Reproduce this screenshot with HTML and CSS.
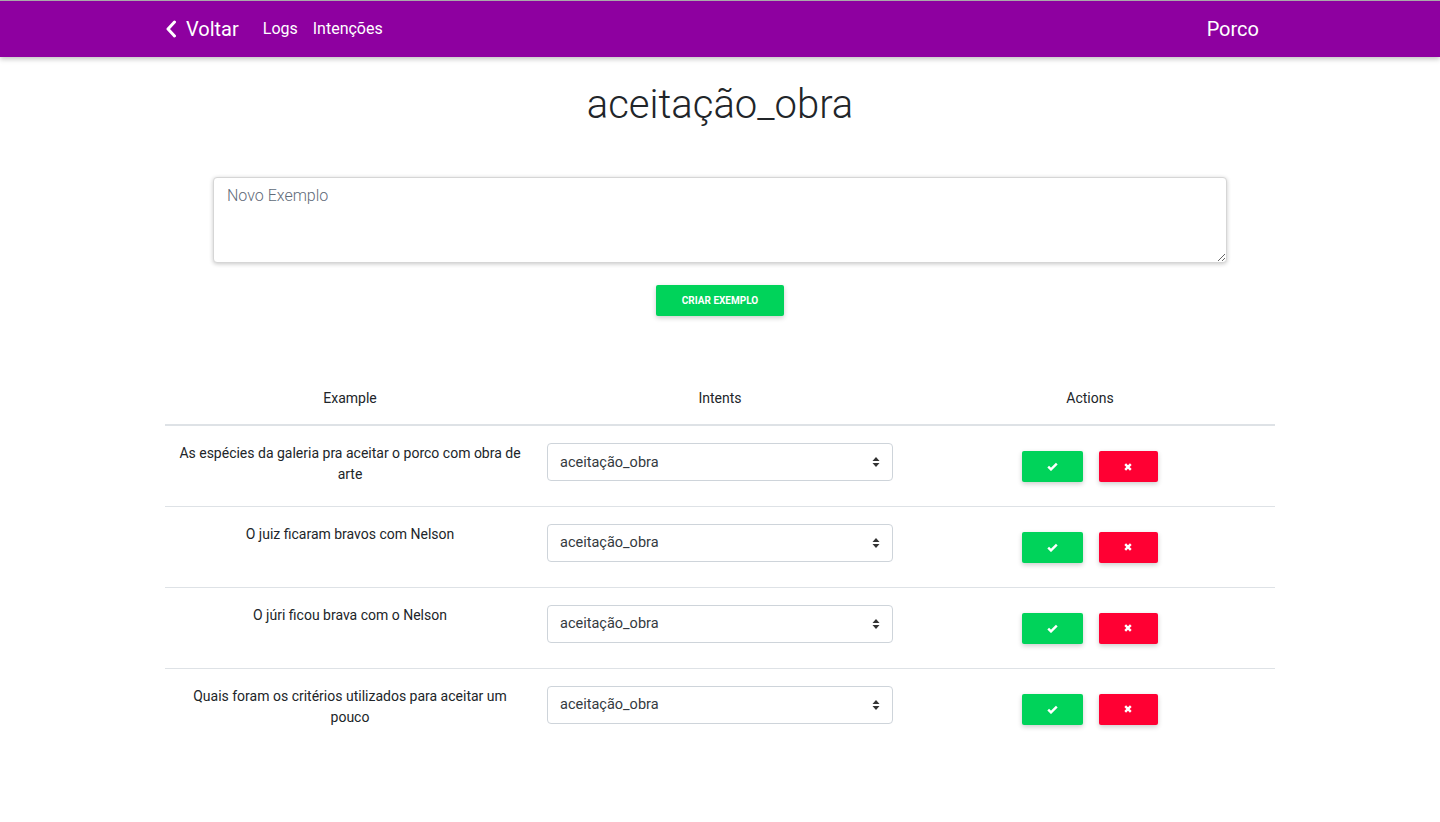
FILE: index.html
```html
<!DOCTYPE html>
<html lang="pt">
<head>
<meta charset="utf-8">
<title>aceitação_obra</title>
<link rel="stylesheet" href="styles.css">
</head>
<body>
<nav class="navbar">
  <div class="nav-inner">
    <div class="nav-left">
      <a class="back" href="#">
        <svg class="chev" width="12" height="18" viewBox="0 0 12 18"><path d="M9.5 2 L3 9 L9.5 16" fill="none" stroke="#fff" stroke-width="3" stroke-linecap="round" stroke-linejoin="round"/></svg>
        <span>Voltar</span>
      </a>
      <a class="nav-link" href="#">Logs</a>
      <a class="nav-link" href="#">Intenções</a>
    </div>
    <div class="brand">Porco</div>
  </div>
</nav>
<main class="container">
  <h1 class="title">aceitação_obra</h1>
  <div class="form">
    <textarea class="new-example" placeholder="Novo Exemplo"></textarea>
    <button class="btn-create">CRIAR EXEMPLO</button>
  </div>
  <table class="examples">
    <thead>
      <tr><th>Example</th><th>Intents</th><th>Actions</th></tr>
    </thead>
    <tbody>
      <tr>
        <td class="text">As espécies da galeria pra aceitar o porco com obra de arte</td>
        <td class="intent"><div class="select"><span>aceitação_obra</span><svg class="arrows" width="8" height="12" viewBox="0 0 8 12"><path d="M4 1 L7.5 5 H0.5 Z M4 11 L7.5 7 H0.5 Z" fill="#333"/></svg></div></td>
        <td class="actions"><div class="btns"><button class="btn ok"><svg width="11" height="9" viewBox="0 0 11 9"><path d="M1.2 4.6 L4 7.4 L9.8 1.6" fill="none" stroke="#fff" stroke-width="2.4"/></svg></button><button class="btn no"><svg width="8" height="8" viewBox="0 0 8 8"><path d="M1.2 1.2 L6.8 6.8 M6.8 1.2 L1.2 6.8" fill="none" stroke="#fff" stroke-width="2.4"/></svg></button></div></td>
      </tr>
      <tr>
        <td class="text">O juiz ficaram bravos com Nelson</td>
        <td class="intent"><div class="select"><span>aceitação_obra</span><svg class="arrows" width="8" height="12" viewBox="0 0 8 12"><path d="M4 1 L7.5 5 H0.5 Z M4 11 L7.5 7 H0.5 Z" fill="#333"/></svg></div></td>
        <td class="actions"><div class="btns"><button class="btn ok"><svg width="11" height="9" viewBox="0 0 11 9"><path d="M1.2 4.6 L4 7.4 L9.8 1.6" fill="none" stroke="#fff" stroke-width="2.4"/></svg></button><button class="btn no"><svg width="8" height="8" viewBox="0 0 8 8"><path d="M1.2 1.2 L6.8 6.8 M6.8 1.2 L1.2 6.8" fill="none" stroke="#fff" stroke-width="2.4"/></svg></button></div></td>
      </tr>
      <tr>
        <td class="text">O júri ficou brava com o Nelson</td>
        <td class="intent"><div class="select"><span>aceitação_obra</span><svg class="arrows" width="8" height="12" viewBox="0 0 8 12"><path d="M4 1 L7.5 5 H0.5 Z M4 11 L7.5 7 H0.5 Z" fill="#333"/></svg></div></td>
        <td class="actions"><div class="btns"><button class="btn ok"><svg width="11" height="9" viewBox="0 0 11 9"><path d="M1.2 4.6 L4 7.4 L9.8 1.6" fill="none" stroke="#fff" stroke-width="2.4"/></svg></button><button class="btn no"><svg width="8" height="8" viewBox="0 0 8 8"><path d="M1.2 1.2 L6.8 6.8 M6.8 1.2 L1.2 6.8" fill="none" stroke="#fff" stroke-width="2.4"/></svg></button></div></td>
      </tr>
      <tr>
        <td class="text">Quais foram os critérios utilizados para aceitar um pouco</td>
        <td class="intent"><div class="select"><span>aceitação_obra</span><svg class="arrows" width="8" height="12" viewBox="0 0 8 12"><path d="M4 1 L7.5 5 H0.5 Z M4 11 L7.5 7 H0.5 Z" fill="#333"/></svg></div></td>
        <td class="actions"><div class="btns"><button class="btn ok"><svg width="11" height="9" viewBox="0 0 11 9"><path d="M1.2 4.6 L4 7.4 L9.8 1.6" fill="none" stroke="#fff" stroke-width="2.4"/></svg></button><button class="btn no"><svg width="8" height="8" viewBox="0 0 8 8"><path d="M1.2 1.2 L6.8 6.8 M6.8 1.2 L1.2 6.8" fill="none" stroke="#fff" stroke-width="2.4"/></svg></button></div></td>
      </tr>
    </tbody>
  </table>
</main>
</body>
</html>
```

FILE: styles.css
```css
* { box-sizing: border-box; }
html, body { margin: 0; padding: 0; }
body {
  font-family: Roboto, "Noto Sans", "Liberation Sans", sans-serif;
  color: #212529;
  background: #fff;
  font-size: 14px;
}
.navbar {
  background: #8e00a0;
  border-top: 1px solid #a9a9a9;
  height: 57px;
  box-shadow: 0 2px 5px rgba(0,0,0,0.25);
}
.nav-inner {
  width: 1110px;
  margin: 0 auto;
  height: 55px;
  display: flex;
  align-items: center;
  justify-content: space-between;
}
.nav-left { display: flex; align-items: center; }
.nav-left a { color: #fff; text-decoration: none; }
.back { display: flex; align-items: center; font-size: 20px; margin-right: 24px; }
.chev { margin-right: 9px; }
.nav-link { font-size: 16px; margin-right: 15px; }
.brand { color: #fff; font-size: 20px; margin-right: 16px; }

.container { width: 1110px; margin: 0 auto; }
.title {
  text-align: center;
  font-size: 40px;
  font-weight: 300;
  line-height: 48px;
  margin: 24px 0 0;
}
.form {
  display: flex;
  flex-direction: column;
  align-items: center;
  margin-top: 48px;
}
.new-example {
  width: 1014px;
  height: 86px;
  border: 1px solid #d6d6d6;
  border-radius: 4px;
  box-shadow: 0 1px 4px rgba(0,0,0,0.22);
  padding: 8px 13px;
  font-family: Roboto, "Noto Sans", sans-serif;
  font-size: 16px;
  font-weight: 300;
  color: #495057;
  resize: vertical;
}
.new-example::placeholder { color: #5f6b7a; }
.btn-create {
  margin-top: 22px;
  width: 128px;
  height: 31px;
  background: #00d35a;
  color: #fff;
  border: none;
  border-radius: 2px;
  font-family: Roboto, sans-serif;
  font-size: 10px;
  font-weight: 700;
  box-shadow: 0 2px 5px rgba(0,0,0,0.2);
}
.examples {
  width: 100%;
  border-collapse: collapse;
  margin-top: 65px;
  table-layout: fixed;
}
.examples th {
  font-weight: 400;
  font-size: 14px;
  padding: 9px 12px 18px;
  border-bottom: 2px solid #dee2e6;
  text-align: center;
}
.examples td {
  padding: 17px 12px 0;
  height: 81px;
  vertical-align: top;
  border-top: 1px solid #dee2e6;
  text-align: center;
  line-height: 21px;
  font-weight: 400;
}
.examples tbody tr:first-child td { border-top: none; }
.select {
  height: 38px;
  border: 1px solid #ced4da;
  border-radius: 4px;
  display: flex;
  align-items: center;
  justify-content: space-between;
  padding: 0 12px;
  color: #343a40;
  font-size: 14.5px;
  font-weight: 400;
}
.actions .btns {
  display: flex;
  justify-content: center;
  gap: 16px;
  margin-top: 8px;
  padding-right: 1px;
}
.btn {
  height: 31px;
  border: none;
  border-radius: 2px;
  display: flex;
  align-items: center;
  justify-content: center;
  box-shadow: 0 2px 5px rgba(0,0,0,0.2);
}
.btn.ok { width: 61px; background: #00d35a; }
.btn.no { width: 59px; background: #ff0033; }
```
